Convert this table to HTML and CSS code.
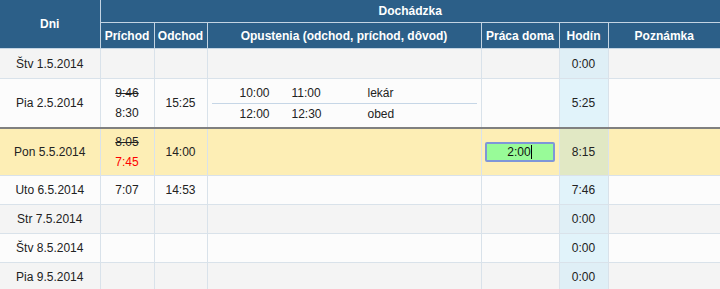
FILE: index.html
```html
<!DOCTYPE html>
<html lang="sk">
<head>
<meta charset="utf-8">
<title>Dochádzka</title>
<link rel="stylesheet" href="styles.css">
</head>
<body>
<table class="att">
  <colgroup>
    <col class="c-dni"><col class="c-pri"><col class="c-odc"><col class="c-opu"><col class="c-pra"><col class="c-hod"><col class="c-poz">
  </colgroup>
  <thead>
    <tr class="h1">
      <th rowspan="2" class="first">Dni</th>
      <th colspan="6" class="last">Dochádzka</th>
    </tr>
    <tr class="h2">
      <th>Príchod</th>
      <th>Odchod</th>
      <th>Opustenia (odchod, príchod, dôvod)</th>
      <th>Práca doma</th>
      <th>Hodín</th>
      <th class="last">Poznámka</th>
    </tr>
  </thead>
  <tbody>
    <tr class="odd first-row">
      <td class="first">Štv 1.5.2014</td><td></td><td></td><td></td><td></td><td class="hod">0:00</td><td class="last"></td>
    </tr>
    <tr class="even tall sep">
      <td class="first">Pia 2.5.2014</td>
      <td><div class="two"><span class="old">9:46</span><span>8:30</span></div></td>
      <td>15:25</td>
      <td class="leaves">
        <div class="sub">
          <div class="sub-row"><span class="t1">10:00</span><span class="t2">11:00</span><span class="why">lekár</span></div>
          <div class="sub-row"><span class="t1">12:00</span><span class="t2">12:30</span><span class="why">obed</span></div>
        </div>
      </td>
      <td></td>
      <td class="hod">5:25</td>
      <td class="last"></td>
    </tr>
    <tr class="today">
      <td class="first">Pon 5.5.2014</td>
      <td><div class="two"><span class="old">8:05</span><span class="red">7:45</span></div></td>
      <td>14:00</td>
      <td></td>
      <td><div class="field">2:00<span class="caret"></span></div></td>
      <td class="hod">8:15</td>
      <td class="last"></td>
    </tr>
    <tr class="even">
      <td class="first">Uto 6.5.2014</td><td>7:07</td><td>14:53</td><td></td><td></td><td class="hod">7:46</td><td class="last"></td>
    </tr>
    <tr class="odd">
      <td class="first">Str 7.5.2014</td><td></td><td></td><td></td><td></td><td class="hod">0:00</td><td class="last"></td>
    </tr>
    <tr class="even">
      <td class="first">Štv 8.5.2014</td><td></td><td></td><td></td><td></td><td class="hod">0:00</td><td class="last"></td>
    </tr>
    <tr class="odd">
      <td class="first">Pia 9.5.2014</td><td></td><td></td><td></td><td></td><td class="hod">0:00</td><td class="last"></td>
    </tr>
  </tbody>
</table>
</body>
</html>
```

FILE: styles.css
```css
html, body {
  margin: 0;
  padding: 0;
  background: #ffffff;
}

body {
  font-family: "Liberation Sans", Arial, sans-serif;
  font-size: 12px;
  color: #222222;
}

.att {
  border-collapse: collapse;
  table-layout: fixed;
  width: 720px;
}

.c-dni { width: 100px; }
.c-pri { width: 54px; }
.c-odc { width: 53px; }
.c-opu { width: 274px; }
.c-pra { width: 78px; }
.c-hod { width: 49px; }
.c-poz { width: 112px; }

.att th {
  background: #2c5f88;
  color: #ffffff;
  font-weight: bold;
  font-size: 12px;
  border: 1px solid #c3d4e3;
  padding: 0;
  text-align: center;
  vertical-align: middle;
}

.att .h1 th {
  border-top: none;
  height: 22px;
}

.att .h2 th {
  height: 25px;
}

.att td {
  border: 1px solid #d9e2ea;
  padding: 0;
  text-align: center;
  vertical-align: middle;
  height: 28px;
}

.att .first { border-left: none; }
.att .last { border-right: none; }

.att .first-row td { height: 29px; }

.odd td { background: #f4f4f4; }
.even td { background: #fcfcfc; }
.odd td.hod { background: #dfeff6; }
.even td.hod { background: #e1f3fa; }

.att .tall td { height: 48px; }
.sep td { border-bottom: 2px solid #808080; }

.att .today td { background: #fdeeb5; height: 46px; }
.att .today td.hod { background: #e1e8c4; }

.two {
  display: flex;
  flex-direction: column;
  align-items: center;
  line-height: 20px;
}

.old { text-decoration: line-through; }
.red { color: #ff0000; }

.att td.leaves { padding: 0 4px; }

.sub {
  display: flex;
  flex-direction: column;
}

.sub-row {
  display: flex;
  height: 20px;
  line-height: 20px;
  text-align: left;
  padding-left: 28px;
}

.sub-row + .sub-row {
  border-top: 1px solid #c6d6e6;
}

.t1 { width: 52px; }
.t2 { width: 76px; }

.field {
  box-sizing: border-box;
  width: 70px;
  height: 20px;
  margin: 0 0 0 3px;
  background: #98fb98;
  border: 2px solid #7f96d8;
  border-radius: 2px;
  text-align: center;
  line-height: 16px;
  font-size: 12px;
  color: #111111;
}

.caret {
  display: inline-block;
  width: 1px;
  height: 14px;
  background: #000000;
  vertical-align: -3px;
}
```
